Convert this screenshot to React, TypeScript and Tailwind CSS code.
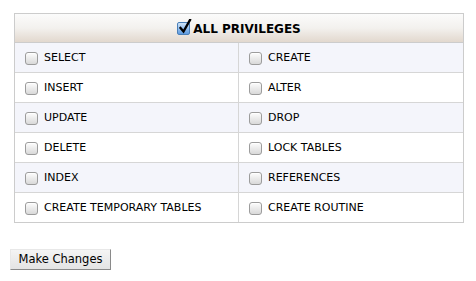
import React from "react";

const rows: [string, string][] = [
  ["SELECT", "CREATE"],
  ["INSERT", "ALTER"],
  ["UPDATE", "DROP"],
  ["DELETE", "LOCK TABLES"],
  ["INDEX", "REFERENCES"],
  ["CREATE TEMPORARY TABLES", "CREATE ROUTINE"],
];

function Box() {
  return (
    <span className="inline-block w-[13px] h-[13px] rounded-[3px] border border-[#9c9c9c] bg-gradient-to-b from-[#fdfdfd] to-[#d9d9d9] shadow-[inset_0_1px_0_#fff] shrink-0" />
  );
}

function CheckedBox() {
  return (
    <span className="relative inline-block w-[13px] h-[13px] rounded-[2px] border border-[#4a7fb8] bg-gradient-to-b from-[#cfe3f7] to-[#5d9be0] shrink-0">
      <svg className="absolute left-[1px] top-[-4px]" width="13" height="15" viewBox="0 0 13 15">
        <path d="M1.5 9 L4.5 12.5 L11 1" fill="none" stroke="#000" strokeWidth="2.4" strokeLinecap="square" />
      </svg>
    </span>
  );
}

export default function App() {
  return (
    <div className="w-[476px] h-[281px] bg-white" style={{ fontFamily: "'DejaVu Sans', Verdana, sans-serif" }}>
      <div className="pt-[13px] pl-[14px]">
        <div className="w-[450px] border border-[#cccccc]">
          <div className="h-[29px] border-b border-[#cccccc] bg-gradient-to-b from-[#fbfbfb] via-[#f3f1ee] to-[#e2d8ce] flex items-center justify-center gap-[3px] pt-[1px]">
            <CheckedBox />
            <span className="text-[12px] font-bold text-black">ALL PRIVILEGES</span>
          </div>
          {rows.map((r, i) => (
            <div
              key={i}
              className={`grid grid-cols-[224px_1fr] ${i < rows.length - 1 ? "h-[30px] border-b border-[#d6d6d6]" : "h-[29px]"} ${i % 2 === 0 ? "bg-[#f4f5fb]" : "bg-white"}`}
            >
              <div className="flex items-center pl-[10px] pt-[1px] gap-[6px] border-r border-[#d6d6d6]">
                <Box />
                <span className="text-[11px] text-black">{r[0]}</span>
              </div>
              <div className="flex items-center pl-[10px] pt-[1px] gap-[6px]">
                <Box />
                <span className="text-[11px] text-black">{r[1]}</span>
              </div>
            </div>
          ))}
        </div>
      </div>
      <div className="pl-[10px] pt-[26px]">
        <button className="w-[101px] h-[21px] bg-gradient-to-b from-[#f4f4f4] to-[#e4e4e4] border border-t-[#e8e8e8] border-l-[#e8e8e8] border-r-[#8a8a8a] border-b-[#8a8a8a] text-[11.5px] text-black flex items-center justify-center">
          Make Changes
        </button>
      </div>
    </div>
  );
}
